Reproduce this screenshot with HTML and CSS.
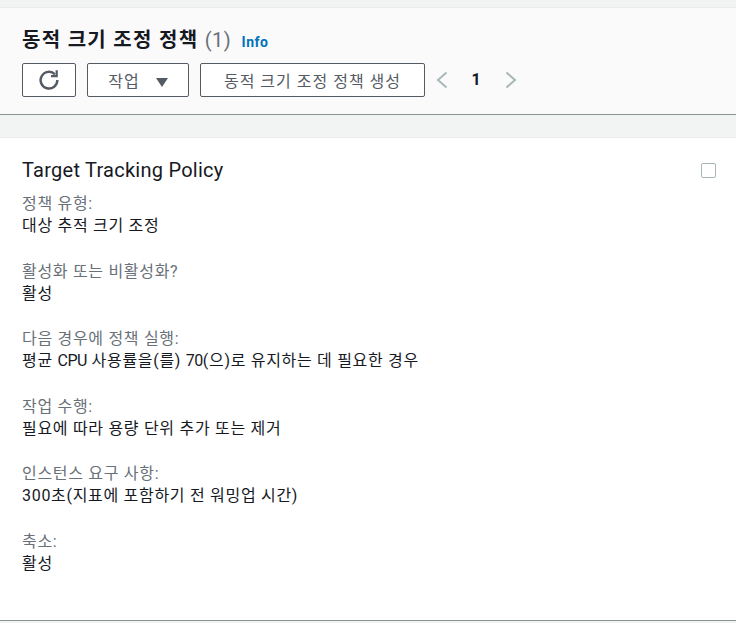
FILE: index.html
```html
<!DOCTYPE html>
<html lang="ko">
<head>
    <meta charset="UTF-8">
    <title>동적 크기 조정 정책</title>
    <link rel="stylesheet" href="styles.css">
</head>
<body>
    <div class="panel header">
        <h1>동적 크기 조정 정책 <span class="count">(1)</span> <a class="info">Info</a></h1>
        <div class="toolbar">
            <button class="btn btn-refresh">
                <svg width="22" height="22" viewBox="0 0 20 20" fill="none" stroke="#545b64" stroke-width="2.2">
                    <path d="M15.4 4.8A7.6 7.6 0 1 0 17.6 10"/>
                    <path d="M17 1.2v5.2h-5.2" stroke-width="2"/>
                </svg>
            </button>
            <button class="btn btn-action">작업 <span class="caret"></span></button>
            <button class="btn btn-create">동적 크기 조정 정책 생성</button>
            <div class="pager">
                <svg width="12" height="18" viewBox="0 0 12 18" fill="none" stroke="#aab7b8" stroke-width="2"><path d="M10.5 1.5L2 9l8.5 7.5"/></svg>
                <span class="page">1</span>
                <svg width="12" height="18" viewBox="0 0 12 18" fill="none" stroke="#aab7b8" stroke-width="2"><path d="M1.5 1.5L10 9l-8.5 7.5"/></svg>
            </div>
        </div>
    </div>

    <div class="panel policy">
        <div class="policy-top">
            <h2>Target Tracking Policy</h2>
            <span class="checkbox"></span>
        </div>
        <div class="field"><div class="label">정책 유형:</div><div class="value">대상 추적 크기 조정</div></div>
        <div class="field"><div class="label">활성화 또는 비활성화?</div><div class="value">활성</div></div>
        <div class="field"><div class="label">다음 경우에 정책 실행:</div><div class="value">평균 <span class="latin">CPU</span> 사용률을(를) <span class="latin">70</span>(으)로 유지하는 데 필요한 경우</div></div>
        <div class="field"><div class="label">작업 수행:</div><div class="value">필요에 따라 용량 단위 추가 또는 제거</div></div>
        <div class="field"><div class="label">인스턴스 요구 사항:</div><div class="value">300초(지표에 포함하기 전 워밍업 시간)</div></div>
        <div class="field"><div class="label">축소:</div><div class="value">활성</div></div>
    </div>
</body>
</html>
```

FILE: styles.css
```css
body {
    font-family: "Roboto", "Noto Sans CJK KR", sans-serif;
    font-size: 16px;
    line-height: 22px;
    letter-spacing: 0.7px;
    background: #f2f3f3;
    color: #16191f;
    margin: 0;
    padding: 7px 0 0;
    overflow: hidden;
}
.panel {
    border-top: 1px solid #eaeded;
    border-bottom: 1px solid #879596;
}
.header {
    background: #fafafa;
    height: 106px;
    padding: 0 22px;
}
h1 {
    font-size: 20px;
    font-weight: 700;
    line-height: 24px;
    letter-spacing: 1.3px;
    margin: 0;
    padding-top: 20px;
}
.count {
    font-weight: 400;
    color: #687078;
    letter-spacing: 0.5px;
}
.info {
    font-size: 14px;
    color: #0073bb;
    letter-spacing: 0.5px;
    margin-left: 4px;
}
.toolbar {
    display: flex;
    align-items: center;
    margin-top: 9px;
}
.btn {
    height: 34px;
    box-sizing: border-box;
    background: #fff;
    border: 1px solid #545b64;
    border-radius: 2px;
    color: #545b64;
    font-family: inherit;
    font-size: 16px;
    letter-spacing: 1px;
    padding: 0;
    margin-right: 11px;
}
.btn-refresh {
    width: 54px;
    display: flex;
    align-items: center;
    justify-content: center;
}
.btn-action {
    width: 102px;
}
.caret {
    display: inline-block;
    width: 0;
    height: 0;
    border-left: 6px solid transparent;
    border-right: 6px solid transparent;
    border-top: 9px solid #545b64;
    margin-left: 11px;
}
.btn-create {
    width: 225px;
}
.pager {
    display: flex;
    align-items: center;
}
.page {
    width: 57px;
    text-align: center;
    font-weight: 700;
}
.policy {
    background: #fff;
    margin-top: 22px;
    height: 482px;
    padding: 0 20px 0 22px;
}
.policy-top {
    display: flex;
    justify-content: space-between;
    align-items: center;
    padding-top: 18px;
}
h2 {
    font-size: 20px;
    font-weight: 400;
    line-height: 28px;
    letter-spacing: 0.25px;
    margin: 0;
}
.checkbox {
    width: 13px;
    height: 13px;
    border: 1px solid #aab7b8;
    border-radius: 2px;
}
.field {
    margin-bottom: 23.6px;
}
.policy-top + .field {
    margin-top: 9px;
}
.label {
    color: #687078;
}
.value {
    color: #16191f;
}
.latin {
    letter-spacing: -0.5px;
}
```
